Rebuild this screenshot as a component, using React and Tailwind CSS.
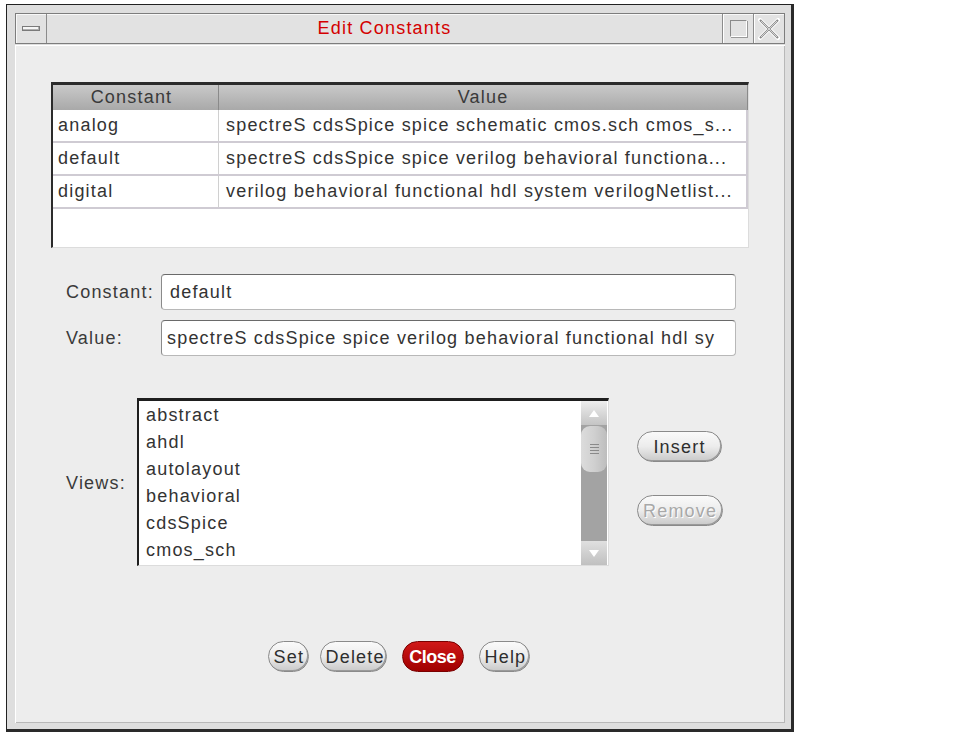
import React from 'react';

const FONT = { fontFamily: '"Liberation Sans", Arial, sans-serif' };

const rows = [
    { name: 'analog', value: 'spectreS cdsSpice spice schematic cmos.sch cmos_s...' },
    { name: 'default', value: 'spectreS cdsSpice spice verilog behavioral functiona...' },
    { name: 'digital', value: 'verilog behavioral functional hdl system verilogNetlist...' },
];

const views = ['abstract', 'ahdl', 'autolayout', 'behavioral', 'cdsSpice', 'cmos_sch'];

const PillButton = ({ children, className = '', disabled = false }) => (
    <button
        className={`h-[31px] rounded-full border border-[#8a8a8a] bg-gradient-to-b from-[#fafafa] via-[#ececec] to-[#c9c9c9] px-[5px] text-[18px] leading-none shadow-[inset_-1px_-1px_0_#9a9a9a] ${disabled ? 'text-[#a8a8a8] [text-shadow:1px_1px_0_#ffffff]' : 'text-[#2e2e2e]'} ${className}`}
    >
        {children}
    </button>
);

const TitleButton = ({ children }) => (
    <div className="w-[31px] h-full border-l border-[#8c8c8c] shadow-[inset_1px_0_0_#ffffff] flex items-center justify-center">
        {children}
    </div>
);

export default function App() {
    return (
        <div className="min-h-[737px] bg-white pl-[6px] pt-[4px] tracking-[1.2px]" style={FONT}>
            <div className="w-[788px] h-[728px] border-t border-l border-[#222] border-r-[3px] border-b-[3px] border-r-[#2a2a2a] border-b-[#2a2a2a] bg-[#dedede] p-[8px] pb-[6px] pr-[6px] flex flex-col">
                {/* title bar */}
                <div className="h-[31px] flex border border-[#7d7d7d] bg-[#e2e2e2] shadow-[inset_1px_1px_0_#f8f8f8]">
                    <div className="w-[31px] h-full border-r border-[#8c8c8c] flex items-center justify-center">
                        <div className="w-[18px] h-[5px] border border-[#7a7a7a] bg-[#f6f6f6] shadow-[inset_-1px_-1px_0_#b0b0b0]" />
                    </div>
                    <div className="flex-1 flex items-center justify-center text-[18px] text-[#d40000]">
                        Edit Constants
                    </div>
                    <TitleButton>
                        <div className="w-[17px] h-[17px] border border-t-[#8a8a8a] border-l-[#8a8a8a] border-r-white border-b-white shadow-[1px_1px_0_#9a9a9a]" />
                    </TitleButton>
                    <TitleButton>
                        <svg width="22" height="22" viewBox="0 0 22 22">
                            <path d="M2 2 L20 20 M20 2 L2 20" stroke="#ffffff" strokeWidth="4" strokeLinecap="square" />
                            <path d="M2 2 L20 20 M20 2 L2 20" stroke="#8a8a8a" strokeWidth="2.2" fill="none" />
                            <path d="M3 3 L19 19 M19 3 L3 19" stroke="#e8e8e8" strokeWidth="0.8" fill="none" />
                        </svg>
                    </TitleButton>
                </div>

                {/* content */}
                <div className="flex-1 mt-[1px] bg-[#ededed] border-l border-t border-white shadow-[inset_-1px_-1px_0_#b8b8b8] flex flex-col pt-[36px]">
                    {/* table */}
                    <div className="ml-[35px] w-[698px] h-[166px] bg-white border-t-[3px] border-l-[2px] border-[#2b2b2b] border-r border-b border-r-[#dcdcdc] border-b-[#dcdcdc] flex flex-col">
                        <div className="h-[25px] flex bg-gradient-to-b from-[#c9c9c9] to-[#a9a9a9] text-[18px] text-[#3a3a3a]">
                            <div className="w-[166px] flex items-center justify-center border-r border-[#8a8a8a] pr-[8px]">Constant</div>
                            <div className="flex-1 flex items-center justify-center border-r border-[#8a8a8a]">Value</div>
                        </div>
                        {rows.map((r) => (
                            <div key={r.name} className="h-[33px] flex border-b-2 border-[#cfcbd3] text-[18px] text-[#333]">
                                <div className="w-[166px] flex items-center pl-[5px] border-r border-[#d0d0d0]">{r.name}</div>
                                <div className="flex-1 flex items-center pl-[7px] border-r-2 border-[#cfcbd3] whitespace-nowrap overflow-hidden">{r.value}</div>
                            </div>
                        ))}
                    </div>

                    {/* constant / value fields */}
                    <div className="mt-[26px] ml-[50px] flex items-center">
                        <div className="w-[95px] text-[18px] text-[#3a3a3a]">Constant:</div>
                        <div className="w-[575px] h-[36px] bg-white rounded-[4px] border border-[#b8b8b8] border-t-[#6a6a6a] border-l-[#8a8a8a] flex items-center pl-[8px] text-[18px] text-[#333]">
                            default
                        </div>
                    </div>
                    <div className="mt-[10px] ml-[50px] flex items-center">
                        <div className="w-[95px] text-[18px] text-[#3a3a3a]">Value:</div>
                        <div className="w-[575px] h-[36px] bg-white rounded-[4px] border border-[#b8b8b8] border-t-[#6a6a6a] border-l-[#8a8a8a] flex items-center pl-[5px] text-[18px] text-[#333] whitespace-nowrap overflow-hidden">
                            spectreS cdsSpice spice verilog behavioral functional hdl sy
                        </div>
                    </div>

                    {/* views */}
                    <div className="mt-[42px] ml-[50px] flex">
                        <div className="w-[71px] flex items-center text-[18px] text-[#3a3a3a] pt-[2px]">Views:</div>
                        <div className="w-[472px] h-[168px] flex bg-white border-t-[3px] border-l-[2px] border-[#1e1e1e] border-r border-b border-r-[#dcdcdc] border-b-[#dcdcdc]">
                            <div className="flex-1 pl-[7px] pt-[1px] text-[18px] text-[#333] leading-[27px]">
                                {views.map((v) => (
                                    <div key={v}>{v}</div>
                                ))}
                            </div>
                            <div className="w-[26px] mr-[1px] bg-[#a3a3a3] flex flex-col">
                                <div className="h-[24px] bg-gradient-to-b from-[#eeeeee] to-[#c4c4c4] flex items-center justify-center">
                                    <svg width="12" height="9" viewBox="0 0 12 9"><path d="M6 1 L11 8 L1 8 Z" fill="#ffffff" /></svg>
                                </div>
                                <div className="h-[46px] mt-[1px] rounded-[9px] bg-gradient-to-r from-[#dcdcdc] via-[#d0d0d0] to-[#bdbdbd] flex flex-col items-center justify-center gap-[2px]">
                                    <div className="w-[9px] h-[1px] bg-[#8a8a8a]" />
                                    <div className="w-[9px] h-[1px] bg-[#8a8a8a]" />
                                    <div className="w-[9px] h-[1px] bg-[#8a8a8a]" />
                                    <div className="w-[9px] h-[1px] bg-[#8a8a8a]" />
                                </div>
                                <div className="flex-1" />
                                <div className="h-[24px] bg-gradient-to-b from-[#e0e0e0] to-[#c0c0c0] flex items-center justify-center">
                                    <svg width="12" height="9" viewBox="0 0 12 9"><path d="M1 1 L11 1 L6 8 Z" fill="#ffffff" /></svg>
                                </div>
                            </div>
                        </div>
                        <div className="ml-[28px] flex flex-col pt-[33px] gap-[33px]">
                            <PillButton className="w-[85px]">Insert</PillButton>
                            <PillButton className="w-[86px]" disabled>Remove</PillButton>
                        </div>
                    </div>

                    {/* bottom buttons */}
                    <div className="mt-[75px] flex justify-center gap-[11px] pr-[4px]">
                        <PillButton className="w-[41px] px-0">Set</PillButton>
                        <PillButton className="w-[67px] px-0">Delete</PillButton>
                        <button className="w-[62px] h-[31px] mx-[4px] rounded-full border border-[#7a0000] bg-gradient-to-b from-[#d01818] to-[#a00000] text-white text-[18px] font-bold leading-none tracking-[-0.5px]">
                            Close
                        </button>
                        <PillButton className="w-[51px] px-0">Help</PillButton>
                    </div>
                </div>
            </div>
        </div>
    );
}
